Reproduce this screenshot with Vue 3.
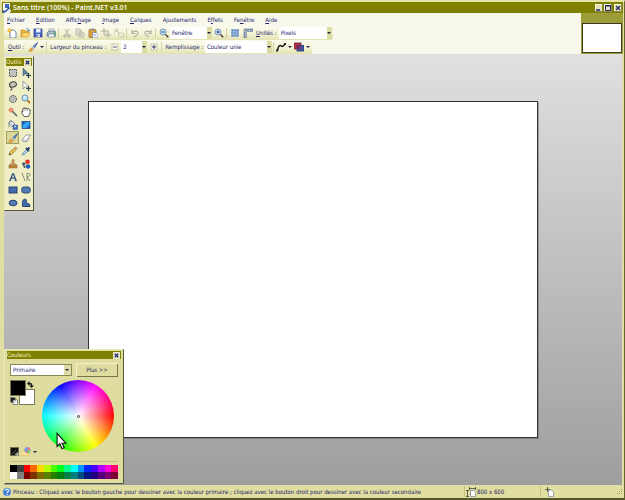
<script setup>
import { ref } from 'vue'

const icons = {
  app: '<rect x="1" y="0" width="7" height="10" fill="#f4f6fc"/><path d="M3 1h4v4H3z" fill="#3c64b4"/><path d="M0 7l3 1 4-4 1 1-4 4-3 1z" fill="#25468c"/><path d="M7 7h2v2H7z" fill="#d8dcf0"/>',
  new: '<path d="M3 2h4l2 2v6H3z" fill="#fff" stroke="#56699c" stroke-width=".8"/><path d="M2.500 0v5M0 2.500h5M1 1l3 3M4 1L1 4" stroke="#eda11b" stroke-width=".9"/><circle cx="2.500" cy="2.500" r="1" fill="#fff08a"/>',
  open: '<path d="M1 9V2h3l1 1h3v2" fill="#f0b840" stroke="#b87818" stroke-width=".6"/><path d="M1 9l2-4.500h7L8 9z" fill="#ffd671" stroke="#c58a21" stroke-width=".6"/><path d="M6 1c2-1 3 0 3 2M8 2l1 1.500L10 2" fill="none" stroke="#4a70ba" stroke-width=".8"/>',
  save: '<rect x="1" y="1" width="8" height="8" fill="#4862c2" stroke="#28388c" stroke-width=".7"/><rect x="3" y="1" width="4.500" height="3.500" fill="#e8f0ff"/><rect x="3" y="6" width="4" height="3" fill="#c9d0e8"/><rect x="3.500" y="6.500" width="1" height="2" fill="#28388c"/>',
  print: '<path d="M3 4V1h5v3" fill="#fff" stroke="#6d7a94" stroke-width=".6"/><path d="M1 5l2-2h6l1 2v3H1z" fill="#aabbd2" stroke="#52657f" stroke-width=".7"/><path d="M3 6h5l1 3H2z" fill="#f5f8fa" stroke="#52657f" stroke-width=".5"/><circle cx="8.500" cy="5.500" r="1" fill="#38b848"/>',
  cut: '<path d="M3 1l3.500 6M7 1L3.500 7" stroke="#b3b3a6" fill="none"/><circle cx="3" cy="8" r="1.200" fill="none" stroke="#a6a69b"/><circle cx="7" cy="8" r="1.200" fill="none" stroke="#a6a69b"/>',
  copy: '<path d="M1 1h4l1 1v5H1zM4 4h4l1 1v4H4z" fill="#e0e0d2" stroke="#b1b1a4" stroke-width=".8"/><path d="M5.500 6h2M5.500 7.500h2" stroke="#b1b1a4" stroke-width=".5"/>',
  paste: '<rect x="1" y="1.500" width="7" height="8" rx="1" fill="#e0a23a" stroke="#8d5d1d" stroke-width=".7"/><rect x="3" y=".5" width="3" height="2" fill="#8792ad"/><path d="M4.500 4.500h3.500l2 2v3.500H4.500z" fill="#fff" stroke="#4966a8" stroke-width=".6"/><path d="M5.500 6.500h2M5.500 8h3" stroke="#6f87bd" stroke-width=".6"/>',
  crop: '<path d="M3 0v7h7M0 3h7v7" fill="none" stroke="#aaaaa0"/><path d="M3 7l5-5" stroke="#c3c3b6" stroke-width=".7"/>',
  deselect: '<path d="M4.500 5h5v4h-5z" fill="none" stroke="#b5b5a8" stroke-width=".8" stroke-dasharray="1 .6"/><path d="M.5 1l5 4M.5 4.500L4 .5" stroke="#b0b0a4" stroke-width=".9"/>',
  undo: '<path d="M2 2v3.500h3.500M2 5c2-3 6-2 6 0S6 8 4 9" fill="none" stroke="#b2b2a6" stroke-width="1.200"/>',
  redo: '<path d="M8 2v3.500H4.500M8 5C6 2 2 3 2 5s2 3 4 4" fill="none" stroke="#b2b2a6" stroke-width="1.200"/>',
  zoomout: '<circle cx="4" cy="4" r="3" fill="#c8e4f8" stroke="#7f98b8"/><path d="M6.500 6.500L9.200 9.200" stroke="#4f4638" stroke-width="1.600"/><path d="M2.500 4h3" stroke="#233f77"/>',
  zoomin: '<circle cx="4" cy="4" r="3" fill="#c8e4f8" stroke="#7f98b8"/><path d="M6.500 6.500L9.200 9.200" stroke="#4f4638" stroke-width="1.600"/><path d="M2.500 4h3M4 2.500v3" stroke="#233f77"/>',
  grid: '<rect x="1" y="1" width="8" height="8" fill="#a5c4e4"/><path d="M2.500 1v8M5 1v8M7.500 1v8M1 2.500h8M1 5h8M1 7.500h8" stroke="#6b8fc0" stroke-width=".8"/>',
  ruler: '<path d="M1 1h9v2.500H3.500V10H1z" fill="#bfcbdc" stroke="#62728e" stroke-width=".6"/><path d="M3 1v2M5 1v1.500M7 1v1.500M9 1v1.500M1 5h1.500M1 7h1.500M1 9h1.500" stroke="#354468" stroke-width=".7"/>',
  brush: '<path d="M9.500.5L5 4.500 6.500 6z" fill="#6f98d8" stroke="#37609e" stroke-width=".9"/><path d="M5 4.500L3.500 6 5 7.500 6.500 6z" fill="#d7dbe5" stroke="#7a849a" stroke-width=".4"/><path d="M3.500 6C2 6 2.500 8 .5 9c2 1 4.500 0 4.500-1.500z" fill="#eba63d" stroke="#a56a1c" stroke-width=".4"/>',
  minus: '<rect x="2" y="2" width="6" height="6" fill="#fbfbed" stroke="#b3b396" stroke-width=".7"/><path d="M3 5h4" stroke="#545478"/>',
  plus: '<rect x="2" y="2" width="6" height="6" fill="#fbfbed" stroke="#b3b396" stroke-width=".7"/><path d="M3 5h4M5 3v4" stroke="#383868"/>',
  curve: '<path d="M1.500 9C2 5 3 3 4.500 3.500S6 6 9 2" fill="none" stroke="#181818" stroke-width="1.500"/><path d="M0 7.500h2v2H0zM8 1h2v2H8z" fill="#222"/>',
  blend: '<rect x="0" y="1" width="7" height="6" fill="#c03048" stroke="#6a2039" stroke-width=".8"/><rect x="3" y="3.500" width="7" height="5.500" fill="#4056a0" stroke="#243370" stroke-width=".8"/><path d="M3 3.500h4V7H3z" fill="#772f61"/>',
  rectselect: '<rect x="1.500" y="1.500" width="7" height="7" fill="#bfc2bd" stroke="#454c51" stroke-width="1" stroke-dasharray="1.400 1"/>',
  move: '<path d="M2 0v8l2-2 4 .2z" fill="#67829c" stroke="#435c76" stroke-width=".6"/><path d="M7.500 5v5M5 7.500h5" stroke="#1e334a" stroke-width="1.200"/>',
  lasso: '<ellipse cx="5" cy="3.500" rx="3.500" ry="2.500" transform="rotate(-15 5 3.500)" fill="#c4c4b8" stroke="#454545"/><path d="M2 5c-1 2 2 1 2 3S2 9 2 9" fill="none" stroke="#454545"/>',
  movesel: '<path d="M2 0v8l2-2 4 .2z" fill="#fafafa" stroke="#777f88" stroke-width=".7"/><path d="M7.500 5v5M5 7.500h5" stroke="#324250" stroke-width="1.200"/>',
  ellipseselect: '<circle cx="5" cy="5" r="3.600" fill="#b6b9b4" stroke="#474d51" stroke-width="1" stroke-dasharray="1.300 .8"/>',
  zoom: '<circle cx="4" cy="4" r="3" fill="#bfe4ff" stroke="#5c89b4" stroke-width=".9"/><path d="M6.500 6.500L9 9" stroke="#b57430" stroke-width="1.800"/><path d="M2.500 3.500L4 2" stroke="#fff"/>',
  wand: '<path d="M4 4l5 5" stroke="#59616a" stroke-width="1.600"/><circle cx="3" cy="3" r="2" fill="#f08060"/><path d="M3 0v6M0 3h6" stroke="#d85c4a" stroke-width=".6"/><circle cx="3" cy="3" r=".8" fill="#ffe6b8"/>',
  hand: '<path d="M3 9.500L.6 5.500c-.5-1 .5-1.500 1.200-.5V2c0-1 1-1 1.300 0 0-1.800 1.600-1.800 1.800 0 .2-1.500 1.600-1.300 1.700.3.3-1 1.700-.8 1.700.5h.8L9 6 7.500 9.500z" fill="#fff" stroke="#3e3b38" stroke-width=".8"/><path d="M3.300 2v2M5 2v2M6.500 2.500V4" stroke="#777" stroke-width=".5"/>',
  fill: '<path d="M1 3l3-2 3 3-3 3z" fill="#dbe3ed" stroke="#65758b" stroke-width=".7"/><path d="M1 3c0-2 2-3 3-2M1 3v4" fill="none" stroke="#667384" stroke-width=".8"/><path d="M5 5h4.500v4.500H5z" fill="#3f6fbd" stroke="#284b8b" stroke-width=".5"/><circle cx="7" cy="6.500" r="1" fill="#c3dcf6"/>',
  gradient: '<defs><linearGradient id="tool-gradient" x2="1" y2="1"><stop stop-color="#003aaf"/><stop offset=".5" stop-color="#38b6ff"/><stop offset="1" stop-color="#0643b4"/></linearGradient></defs><rect x="1" y="1.500" width="8" height="7" fill="url(#tool-gradient)" stroke="#173978" stroke-width=".7"/>',
  eraser: '<path d="M1 7l4-5h4.500L6 8.500H2z" fill="#fff" stroke="#858795" stroke-width=".8"/><path d="M1 7h4l4.500-5M5 7l1 1.500" fill="none" stroke="#a0a2b4" stroke-width=".6"/>',
  pencil: '<path d="M1 9l1-3 5.500-5L9 2.500 4 8z" fill="#edc550" stroke="#766428" stroke-width=".6"/><path d="M1 9l.5-1.500L3 8z" fill="#222"/><path d="M7 1.500L8.500 3" stroke="#d68168" stroke-width="1.300"/>',
  picker: '<path d="M1 9l1-2 4-4 1.500 1.500-4 4z" fill="#a9d4f5" stroke="#4a6580" stroke-width=".6"/><path d="M5 2l3 3M6.500 3.500L8.500 1.500" stroke="#233e64" stroke-width="1.800"/>',
  stamp: '<path d="M4 1c1-1.500 3 0 2 1.500L5.800 5H8l1 2H1l1-2h2.200L4 2.500z" fill="#dca35d" stroke="#8c6332" stroke-width=".6"/><rect x="1" y="7" width="8" height="2" fill="#c98937" stroke="#755126" stroke-width=".4"/>',
  recolor: '<circle cx="6.500" cy="2.800" r="2.300" fill="#e22c22"/><circle cx="2.800" cy="5" r="1.700" fill="#44596d"/><circle cx="7" cy="7.500" r="2.200" fill="#175bbf"/><path d="M2 6l3 2-2 1z" fill="#3a3d43"/>',
  text: '<path d="M2 8.500L4.700 1.800h.8L8 8.500M3.200 6.200h3.600" fill="none" stroke="#2d4d7d" stroke-width="1.300"/><path d="M1 8.700h2.400M6.300 8.700H9" stroke="#2d4d7d" stroke-width=".8"/>',
  line: '<path d="M1 1l3 8M6 1v8M6 1.500c4-1 4 3 0 3.500l3 4" fill="none" stroke="#6e746c" stroke-width=".8"/>',
  rectangle: '<rect x="1" y="2" width="8" height="6" fill="#426ca9" stroke="#203b67" stroke-width=".9"/>',
  roundrect: '<rect x=".7" y="2" width="8.600" height="6" rx="2.400" fill="#527cb5" stroke="#203b67" stroke-width=".9"/>',
  ellipse: '<ellipse cx="5" cy="5" rx="4" ry="2.800" fill="#517cb6" stroke="#203b67" stroke-width=".9"/>',
  freeform: '<path d="M1.500 8.500v-4C1 1 5 .5 5.500 2S4 4 6 5s3 1 3 3.500z" fill="#426ca9" stroke="#203b67" stroke-width=".9"/>',
  swap: '<path d="M0 3.500L3.500 0v2.500c3 0 4 1 4 4H10L6.500 10 3.500 6.500h2c0-1.500-.5-2-2-2V7z" fill="#191919"/>',
  reset: '<rect x="3.500" y="3.500" width="6" height="6" rx="1" fill="#fff" stroke="#555"/><rect x=".5" y=".5" width="6" height="6" rx="1" fill="#222" stroke="#777"/><path d="M4 4h3v3H4z" fill="#ddd"/>',
  addcolor: '<rect x=".5" y=".5" width="9" height="9" fill="#111" stroke="#707050"/><path d="M2 8l5-5" stroke="#555"/><path d="M8 5.500V10M5.500 8H10" stroke="#ddd"/>',
  palettes: '<circle cx="6" cy="3.500" r="3.200" fill="#b078e0"/><path d="M6 3.500V.3a3.200 3.200 0 0 1 3.200 3.200z" fill="#f27591"/><path d="M6 3.500h3.200A3.200 3.200 0 0 1 6 6.700z" fill="#65dc50"/><path d="M6 3.500H2.800A3.200 3.200 0 0 1 6 .3z" fill="#61a9f1"/><path d="M0 9.500V4.500h2l1 1h1l1 1.500h3.500L7 9.500z" fill="#ffe39a" stroke="#e6ad4e" stroke-width=".5"/>',
  help: '<circle cx="5" cy="5" r="4" fill="#3979cd" stroke="#91b5df" stroke-width=".8"/><path d="M3.500 3.800C3.500 2 7 2 6.500 4 6.300 5 5 5 5 6.200M5 7v1" fill="none" stroke="#fff" stroke-width="1.100"/>',
  size: '<path d="M4.500 3.500h3l2 2v4h-5z" fill="#fff" stroke="#6f80a0" stroke-width=".7"/><path d="M1.500 3v7M0 3.500h3M0 9.500h3M3 1.500h7M3.500 0v3M9.500 0v3" stroke="#30302a" stroke-width=".7"/>',
  position: '<path d="M3.500 3h3l2 2v4.500h-5z" fill="#fff" stroke="#7585a2" stroke-width=".7"/><path d="M2.500 0v5M0 2.500h5" stroke="#44443a" stroke-width=".8"/>'
}

const menus = [
  ['', 'F', 'ichier'], ['', 'E', 'dition'], ['Affic', 'h', 'age'], ['', 'I', 'mage'], ['', 'C', 'alques'],
  ['A', 'j', 'ustements'], ['E', 'f', 'fets'], ['Fe', 'n', 'être'], ['', 'A', 'ide']
]

const fileGroup = ['new', 'open', 'save', 'print']
const editGroup = ['cut', 'copy', 'paste', 'crop', 'deselect']
const historyGroup = ['undo', 'redo']

const tools = [
  'rectselect', 'move', 'lasso', 'movesel', 'ellipseselect', 'zoom', 'wand', 'hand', 'fill', 'gradient',
  'brush', 'eraser', 'pencil', 'picker', 'stamp', 'recolor', 'text', 'line', 'rectangle', 'roundrect',
  'ellipse', 'freeform'
]
const activeTool = ref('brush')

const palette = [
  '#000000', '#404040', '#ff0000', '#ff6a00', '#ffd800', '#b6ff00', '#4cff00', '#00ff21',
  '#00ff90', '#00ffff', '#0094ff', '#0026ff', '#4800ff', '#b200ff', '#ff00dc', '#ff006e',
  '#ffffff', '#808080', '#7f0000', '#7f3300', '#7f6a00', '#5b7f00', '#267f00', '#007f0e',
  '#007f46', '#007f7f', '#004a7f', '#00137f', '#21007f', '#57007f', '#7f006e', '#7f0037'
]
</script>

<template>
  <div class="window">
    <header class="titlebar">
      <svg class="icon" viewBox="0 0 10 10" v-html="icons.app"></svg>
      <h1>Sans titre (100%) - Paint.NET v3.01</h1>
      <div class="controls">
        <button class="ctl"><svg viewBox="0 0 8 8"><path d="M1 6h4" stroke="#25256c" stroke-width="1.500" /></svg></button>
        <button class="ctl"><svg viewBox="0 0 8 8"><path d="M1.500 2h5v4.500h-5zM1 1.500h6" fill="none" stroke="#25256c" /></svg></button>
        <button class="ctl close"><svg viewBox="0 0 8 8"><path d="M2 2l4 4M6 2L2 6" stroke="#25256c" stroke-width="1.300" /></svg></button>
      </div>
    </header>

    <div class="top">
      <div class="bars">
        <nav class="menu">
          <button v-for="m in menus" :key="m.join('')">{{ m[0] }}<u>{{ m[1] }}</u>{{ m[2] }}</button>
        </nav>
        <div class="toolbar">
          <button v-for="n in fileGroup" :key="n" class="tb"><svg class="icon" viewBox="0 0 10 10" v-html="icons[n]"></svg></button>
          <i class="sep"></i>
          <button v-for="n in editGroup" :key="n" class="tb"><svg class="icon" viewBox="0 0 10 10" v-html="icons[n]"></svg></button>
          <i class="sep"></i>
          <button v-for="n in historyGroup" :key="n" class="tb"><svg class="icon" viewBox="0 0 10 10" v-html="icons[n]"></svg></button>
          <i class="sep"></i>
          <button class="tb"><svg class="icon" viewBox="0 0 10 10" v-html="icons.zoomout"></svg></button>
          <span class="combo zoomlevel"><select aria-label="Zoom"><option>Fenêtre</option></select></span>
          <button class="tb"><svg class="icon" viewBox="0 0 10 10" v-html="icons.zoomin"></svg></button>
          <i class="sep"></i>
          <button class="tb"><svg class="icon" viewBox="0 0 10 10" v-html="icons.grid"></svg></button>
          <button class="tb"><svg class="icon" viewBox="0 0 10 10" v-html="icons.ruler"></svg></button>
          <label for="units"><u>U</u>nités :</label>
          <span class="combo units"><select id="units"><option>Pixels</option></select></span>
        </div>
        <div class="toolbar">
          <span class="label"><u>O</u>util :</span>
          <button class="tb drop"><svg class="icon" viewBox="0 0 10 10" v-html="icons.brush"></svg></button>
          <i class="sep"></i>
          <label for="brush">Largeur du pinceau :</label>
          <button class="tb"><svg class="icon" viewBox="0 0 10 10" v-html="icons.minus"></svg></button>
          <span class="combo width"><select id="brush"><option>2</option></select></span>
          <button class="tb"><svg class="icon" viewBox="0 0 10 10" v-html="icons.plus"></svg></button>
          <i class="sep"></i>
          <label for="fill">Remplissage :</label>
          <span class="combo fillstyle"><select id="fill"><option>Couleur unie</option></select></span>
          <i class="sep"></i>
          <button class="tb drop"><svg class="icon" viewBox="0 0 10 10" v-html="icons.curve"></svg></button>
          <button class="tb drop"><svg class="icon" viewBox="0 0 10 10" v-html="icons.blend"></svg></button>
        </div>
      </div>
      <aside class="documents"><div class="thumb"></div></aside>
    </div>

    <main class="workspace">
      <div class="canvas"></div>

      <section class="float tools">
        <header><h2>Outils</h2><button class="x"><svg viewBox="0 0 8 8"><path d="M2 2l4 4M6 2L2 6" stroke="#202068" stroke-width="1.400" /></svg></button></header>
        <div class="toolgrid">
          <button v-for="t in tools" :key="t" :class="{ active: t === activeTool }" @click="activeTool = t">
            <svg class="icon" viewBox="0 0 10 10" v-html="icons[t]"></svg>
          </button>
        </div>
      </section>

      <section class="float colors">
        <header><h2>Couleurs</h2><button class="x"><svg viewBox="0 0 8 8"><path d="M2 2l4 4M6 2L2 6" stroke="#202068" stroke-width="1.400" /></svg></button></header>
        <div class="colorbody">
          <div class="row">
            <span class="combo which"><select aria-label="Couleur active"><option>Primaire</option></select></span>
            <button class="more">Plus &gt;&gt;</button>
          </div>
          <div class="picker">
            <div class="side">
              <div class="swatches">
                <span class="secondary"></span>
                <span class="primary"></span>
                <svg class="swap" viewBox="0 0 10 10" v-html="icons.swap"></svg>
                <svg class="reset" viewBox="0 0 10 10" v-html="icons.reset"></svg>
              </div>
              <div class="sidetools">
                <button><svg viewBox="0 0 10 10" v-html="icons.addcolor"></svg></button>
                <button class="tb drop"><svg class="icon" viewBox="0 0 10 10" v-html="icons.palettes"></svg></button>
              </div>
            </div>
            <div class="wheel"><span class="dot"></span></div>
          </div>
          <div class="palette">
            <span v-for="c in palette" :key="c" :style="{ background: c }"></span>
          </div>
        </div>
        <svg class="pointer" viewBox="0 0 10 16"><path d="M1 1v12l2.500-2.500L5.500 15l2-1-2-4H9z" fill="#fff" stroke="#111" /></svg>
      </section>
    </main>

    <footer class="status">
      <p class="hint"><svg class="icon" viewBox="0 0 10 10" v-html="icons.help"></svg><span>Pinceau : Cliquez avec le bouton gauche pour dessiner avec la couleur primaire ; cliquez avec le bouton droit pour dessiner avec la couleur secondaire</span></p>
      <p class="cell size"><svg class="icon" viewBox="0 0 10 10" v-html="icons.size"></svg>800 x 600</p>
      <p class="cell pos"><svg class="icon" viewBox="0 0 10 10" v-html="icons.position"></svg></p>
      <svg class="grip" viewBox="0 0 6 6"><path d="M4 0h1v1H4zM2 2h1v1H2zM4 2h1v1H4zM0 4h1v1H0zM2 4h1v1H2zM4 4h1v1H4z" fill="#aaa850" /></svg>
    </footer>
  </div>
</template>

<style>
body {
  margin: 0;
}
</style>

<style scoped>
.window {
  box-sizing: border-box;
  display: flex;
  flex-direction: column;
  min-height: 100vh;
  padding: 0 1px 0 4px;
  border-top: 2px solid #e6e4aa;
  border-right: 1px solid #66662a;
  border-bottom: 2px solid #55552a;
  background: #e0dea0;
  font: 6px/8px "DejaVu Sans Condensed", "Noto Sans", sans-serif;
  color: #1c1c6c;
}
button {
  display: flex;
  align-items: center;
  justify-content: center;
  margin: 0;
  padding: 0;
  border: 0;
  background: none;
  font: inherit;
  color: inherit;
}
h1, h2, p {
  margin: 0;
}
svg {
  display: block;
}
.icon {
  flex: none;
  width: 10px;
  height: 10px;
}
.titlebar {
  display: flex;
  align-items: center;
  gap: 1px;
  height: 11px;
  margin-left: -2px;
  background: #808000;
}
h1 {
  flex: 1;
  font: 600 7px/10px "Open Sans", sans-serif;
  color: #fff;
}
.controls {
  display: flex;
  gap: 1px;
  padding-right: 1px;
}
.ctl {
  width: 8px;
  height: 8px;
  background: #e4e2b4;
  box-shadow: inset -1px -1px #8a8850, inset 1px 1px #fbfae0;
}
.ctl svg {
  width: 8px;
  height: 8px;
}
.close {
  margin-left: 1px;
}
.top {
  display: flex;
  background: #f7f7ec;
}
.bars {
  flex: 1;
  display: flex;
  flex-direction: column;
  align-items: flex-start;
}
.menu {
  display: flex;
  gap: 11px;
  height: 13px;
  padding: 0 3px;
}
.toolbar {
  display: flex;
  align-items: center;
  height: 14px;
  padding: 0 1px;
  border-radius: 0 2px 2px 0;
  background: linear-gradient(#fbfbee, #f3f3d6 55%, #e3e2b0);
}
.tb {
  width: 13px;
  height: 13px;
}
.drop {
  width: 18px;
  gap: 2px;
}
.drop::after {
  content: "";
  border: 2px solid transparent;
  border-top-color: #25254e;
  border-bottom: 0;
}
.sep {
  width: 1px;
  height: 10px;
  margin: 0 1px;
  background: #d3d2a0;
}
label {
  padding: 0 2px;
}
.label {
  padding: 0 3px;
}
.combo {
  position: relative;
  display: flex;
  height: 12px;
  background: #fff;
}
.combo::before {
  content: "";
  position: absolute;
  top: 0;
  right: 0;
  width: 5px;
  height: 100%;
  background: #dcdba4;
  pointer-events: none;
}
.combo::after {
  content: "";
  position: absolute;
  top: 5px;
  right: 1px;
  border: 2px solid transparent;
  border-top-color: #202048;
  border-bottom: 0;
  pointer-events: none;
}
select {
  appearance: none;
  width: 100%;
  margin: 0;
  padding: 0 2px;
  border: 0;
  border-radius: 0;
  background: none;
  font: inherit;
  color: inherit;
}
.zoomlevel {
  width: 42px;
}
.units {
  width: 53px;
}
.width {
  width: 26px;
}
.fillstyle {
  width: 67px;
}
.documents {
  box-sizing: border-box;
  width: 42px;
  padding: 10px 1px 1px;
  background: #9c9c38;
}
.thumb {
  box-sizing: border-box;
  height: 100%;
  border: 1px solid #3c3c20;
  background: #fff;
}
.workspace {
  position: relative;
  flex: 1;
  display: flex;
  align-items: center;
  justify-content: center;
  margin-right: 1px;
  background: linear-gradient(#e0e0e0, #9e9e9e);
}
.canvas {
  box-sizing: border-box;
  width: 72.8%;
  aspect-ratio: 4 / 3;
  border: 1px solid #333;
  background: #fff;
  box-shadow: 1px 1px #66666680;
}
.float {
  position: absolute;
  box-sizing: border-box;
  padding: 1px 2px 2px;
  border: 1px solid;
  border-color: #e9e8b8 #55553a #55553a #e9e8b8;
  background: #dedc9e;
}
.float header {
  display: flex;
  align-items: center;
  justify-content: space-between;
  height: 8px;
  background: #808000;
}
h2 {
  font: 6px/8px "DejaVu Sans Condensed", "Noto Sans", sans-serif;
  color: #f6f5d0;
}
.x {
  width: 7px;
  height: 7px;
  margin-right: 1px;
  background: #e9e8c8;
}
.x svg {
  width: 7px;
  height: 7px;
}
.tools {
  top: 2px;
  left: 0;
  padding: 1px;
  background: #f0eec4;
}
.toolgrid {
  display: grid;
  grid-template-columns: 13px 13px;
  grid-auto-rows: 13px;
}
.toolgrid .active {
  background: #dbd99c;
  box-shadow: inset 0 0 0 1px #a09e58;
}
.colors {
  bottom: 1px;
  left: 0;
  width: 120px;
}
.colorbody {
  padding: 4px 3px 2px;
}
.row {
  display: flex;
  align-items: center;
  gap: 4px;
}
.which {
  box-sizing: border-box;
  width: 62px;
  border: 1px solid #8a8858;
}
.which::before {
  width: 7px;
}
.which::after {
  top: 4px;
  right: 2px;
}
.more {
  flex: 1;
  height: 14px;
  box-shadow: inset 1px 1px #f3f2c8, inset -1px -1px #77754a;
}
.picker {
  display: flex;
  gap: 5px;
  padding: 3px 0;
  border-bottom: 1px solid #c4c27c;
}
.side {
  display: flex;
  flex-direction: column;
  justify-content: space-between;
  width: 27px;
}
.swatches {
  position: relative;
  height: 26px;
}
.swatches > * {
  position: absolute;
  box-sizing: border-box;
}
.primary, .secondary {
  width: 16px;
  height: 16px;
  border: 1px solid #77775c;
}
.primary {
  top: 0;
  left: 0;
  background: #000;
}
.secondary {
  top: 9px;
  left: 9px;
  background: #fff;
}
.swap {
  top: 1px;
  left: 17px;
  width: 7px;
  height: 7px;
}
.reset {
  top: 17px;
  left: 0;
  width: 8px;
  height: 8px;
}
.sidetools {
  display: flex;
  align-items: center;
  gap: 2px;
}
.sidetools svg {
  width: 9px;
  height: 9px;
}
.wheel {
  display: flex;
  align-items: center;
  justify-content: center;
  width: 72px;
  height: 72px;
  margin-bottom: 6px;
  border-radius: 50%;
  background: radial-gradient(closest-side, #fff, #fff0), conic-gradient(from 90deg, #f00, #ff0, #0f0, #0ff, #00f, #f0f, #f00);
}
.dot {
  width: 1px;
  height: 1px;
  border: 1px solid #333;
  border-radius: 50%;
  background: #ddd;
}
.palette {
  display: grid;
  grid-template-columns: repeat(16, 1fr);
  grid-auto-rows: 7px;
  margin-top: 3px;
}
.pointer {
  position: absolute;
  left: 51px;
  top: 82px;
  width: 11px;
  height: 18px;
}
.status {
  display: flex;
  align-items: center;
  height: 13px;
}
.hint {
  flex: 1;
  display: flex;
  align-items: center;
  gap: 1px;
  margin-left: -2px;
  white-space: nowrap;
}
.cell {
  box-sizing: border-box;
  display: flex;
  align-items: center;
  gap: 1px;
  height: 11px;
  padding-left: 1px;
  border-left: 1px solid #c6c47c;
}
.size {
  width: 76px;
}
.pos {
  width: 77px;
  padding-left: 4px;
}
.grip {
  width: 6px;
  height: 6px;
}
</style>
